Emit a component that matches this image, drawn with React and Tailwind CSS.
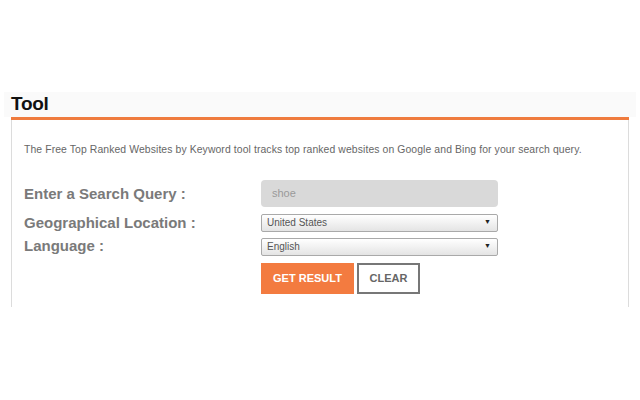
import { useState } from 'react'

// ─── Select box ───────────────────────────────────────────────────────────────
function SelectBox({ value }) {
  return (
    <div className="w-[237px] h-[18px] flex items-center justify-between px-[5px] border border-[#a9a9a9] rounded-[2px] bg-gradient-to-b from-white to-[#e4e4e4] text-[10px] text-[#555]">
      <span>{value}</span>
      <span className="text-[7px] text-[#222] mr-[1px]">▼</span>
    </div>
  )
}

// ─── App ──────────────────────────────────────────────────────────────────────
export default function App() {
  const [query] = useState('shoe')

  return (
    <div className="w-[640px] h-[400px] bg-white overflow-hidden font-['Liberation_Sans',Arial,sans-serif]">
      <div className="pt-[92px]">
        {/* Title bar */}
        <div className="mx-[4px] h-[25px] bg-[#fafafa] flex items-end pl-[7px]">
          <h1 className="text-[19px] font-bold leading-none text-[#111] tracking-[-0.3px] pb-[4px]">Tool</h1>
        </div>
        <div className="ml-[11px] w-[618px] h-[3px] bg-[#ef7b3e]" />

        {/* Content box */}
        <div className="ml-[11px] w-[618px] h-[187px] border-l border-r border-[#dcdcdc] pl-[12px]">
          <p className="pt-[22px] text-[10.4px] text-[#666] tracking-[0.1px]">
            The Free Top Ranked Websites by Keyword tool tracks top ranked websites on Google and Bing for your search query.
          </p>

          <div className="flex mt-[22px]">
            {/* Labels */}
            <div className="w-[237px] flex flex-col text-[15px] font-bold text-[#7a7a7a] leading-none">
              <span className="h-[27px] flex items-center">Enter a Search Query :</span>
              <span className="mt-[8px] h-[16px] flex items-center">Geographical Location :</span>
              <span className="mt-[7px] h-[16px] flex items-center">Language :</span>
            </div>

            {/* Fields */}
            <div className="flex flex-col">
              <div className="w-[237px] h-[27px] rounded-[4px] bg-[#d9d9d9] flex items-center pl-[11px] text-[11px] text-[#9a9a9a]">
                {query}
              </div>
              <div className="mt-[7px]">
                <SelectBox value="United States" />
              </div>
              <div className="mt-[6px]">
                <SelectBox value="English" />
              </div>
              <div className="mt-[7px] flex gap-[3px]">
                <button
                  type="button"
                  className="w-[93px] h-[31px] bg-[#f37b40] text-white text-[11px] font-bold"
                >
                  GET RESULT
                </button>
                <button
                  type="button"
                  className="w-[63px] h-[31px] border-2 border-[#777] bg-white text-[#666] text-[11px] font-bold"
                >
                  CLEAR
                </button>
              </div>
            </div>
          </div>
        </div>
      </div>
    </div>
  )
}
